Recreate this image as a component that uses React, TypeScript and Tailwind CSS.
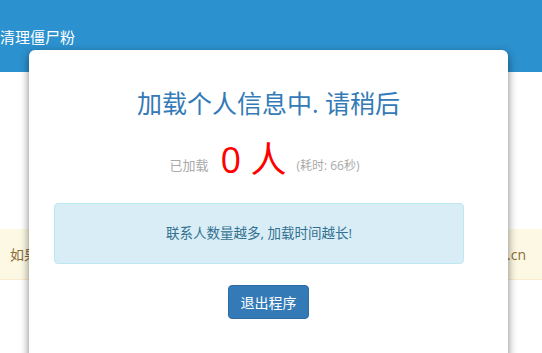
export default function App() {
  const font = { fontFamily: "'Open Sans', 'Noto Sans CJK SC', sans-serif" };

  return (
    <div className="relative h-[353px] w-[542px] overflow-hidden bg-white" style={font}>
      {/* Top bar */}
      <header className="flex h-[72px] items-end bg-[#2c91cf] pb-[27px]">
        <span className="text-[15px] leading-none text-white">清理僵尸粉</span>
      </header>

      {/* Page content behind the modal */}
      <div className="pt-[157px]">
        <div className="flex h-[51px] items-center justify-between border-b border-[#faebcc] bg-[#fcf8e3] px-[10px] text-[14px] text-[#8a6d3b]">
          <span>如果加载时间过长, 请刷新页面重试</span>
          <span className="pr-[6px]">www.qingli.cn</span>
        </div>
      </div>

      {/* Modal */}
      <div className="absolute left-[29px] top-[50px] h-[330px] w-[479px] rounded-[6px] bg-white shadow-[0_3px_9px_rgba(0,0,0,0.5)]">
        <div className="flex flex-col items-center pt-[36px]">
          <h2 className="text-[25px] leading-[34px] text-[#337ab7]">加载个人信息中. 请稍后</h2>

          <div className="mt-[20px] mr-[8px] flex items-end">
            <span className="mb-[5px] text-[13px] text-[#aaaaaa]">已加载</span>
            <span className="ml-[12px] text-[36px] leading-[40px] text-[#ff0000]">0 人</span>
            <span className="mb-[5px] ml-[10px] text-[12px] text-[#aaaaaa]">(耗时: 66秒)</span>
          </div>

          <div className="mt-[23px] ml-[25px] flex h-[61px] w-[410px] items-center justify-center self-start rounded-[4px] border border-[#bce8f1] bg-[#d9edf7] text-[13.5px] text-[#31708f]">
            联系人数量越多, 加载时间越长!
          </div>

          <button className="mt-[21px] h-[34px] w-[81px] rounded-[4px] border border-[#2e6da4] bg-[#337ab7] text-[14px] text-white">
            退出程序
          </button>
        </div>
      </div>
    </div>
  );
}
